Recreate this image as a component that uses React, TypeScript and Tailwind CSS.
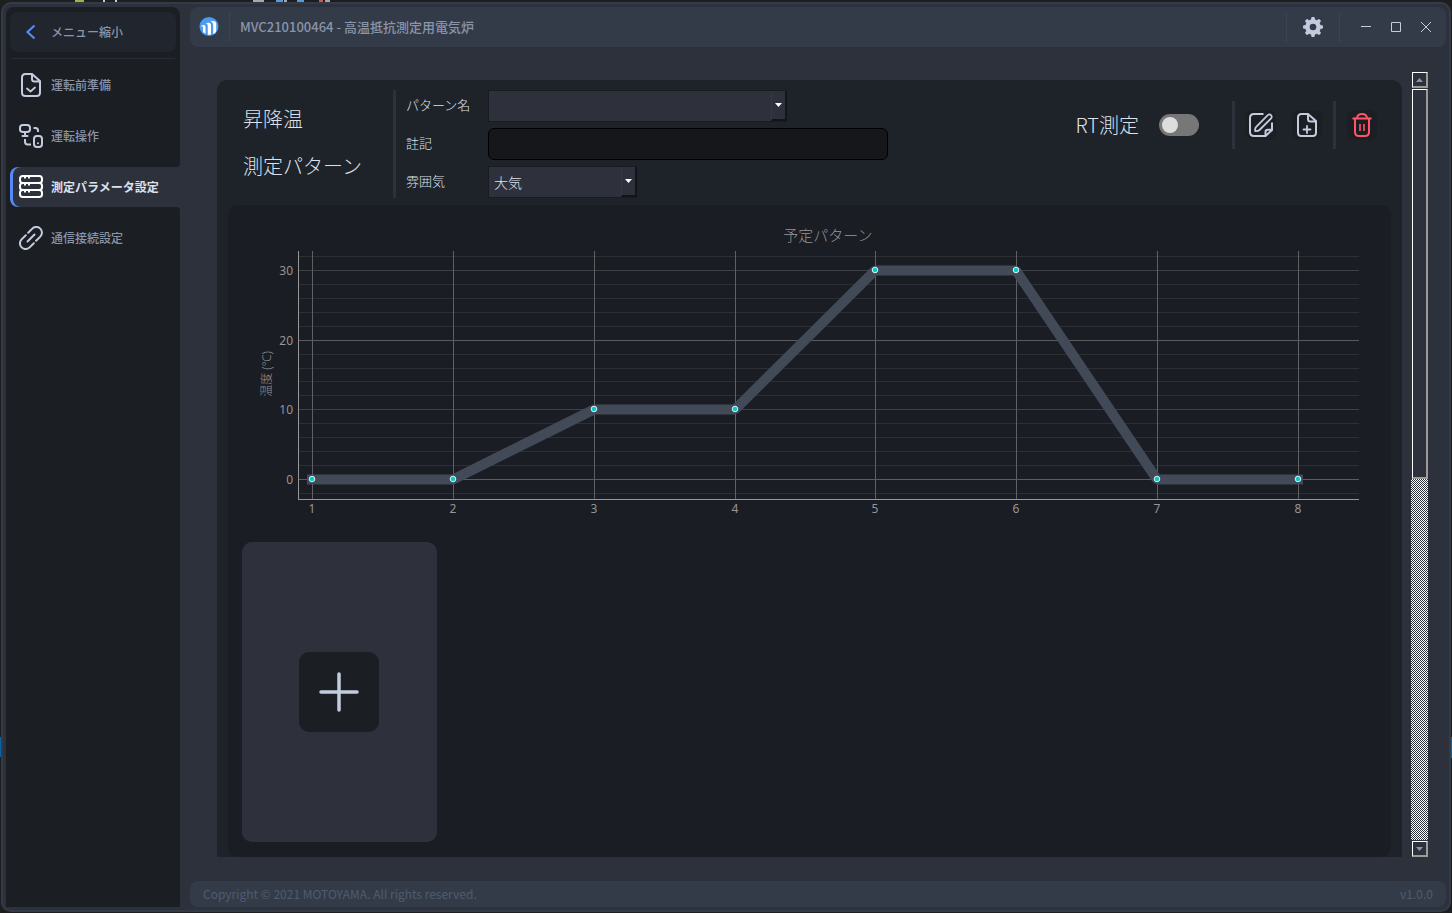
import React, { useState } from "react";

type IconProps = { className?: string };

function StrokeIcon({ className = "size-6", children }: IconProps & { children: React.ReactNode }) {
  return (
    <svg
      viewBox="0 0 24 24"
      className={className}
      fill="none"
      stroke="currentColor"
      strokeWidth="2"
      strokeLinecap="round"
      strokeLinejoin="round"
      aria-hidden="true"
    >
      {children}
    </svg>
  );
}

function FileCheckIcon() {
  return (
    <StrokeIcon>
      <path d="M13 1H6.500C4 1 3 2.500 3 4.500v15C3 21.700 4.200 23 6.500 23h11c2.300 0 3.500-1.300 3.500-3.500V8L13 1v5c0 1.700.8 2.500 2.500 2.500H21" />
      <path d="m8 15.500 3.500 3L16 14.500" strokeWidth="1.800" />
    </StrokeIcon>
  );
}

function OperationIcon() {
  return (
    <StrokeIcon>
      <rect x="1" y="1" width="10" height="7" rx="2.800" />
      <path d="M6 8.500v3.500M3.500 12h5" />
      <path d="M14.500 4h2c1.500 0 2.500 1 2.500 2.500V8" strokeLinecap="butt" />
      <path d="M6 15v2.500C6 19.500 7 20.500 8.500 20.500H12" strokeLinecap="butt" />
      <rect x="15" y="12" width="8" height="11" rx="3" />
      <path d="M19 19.200v.1" />
    </StrokeIcon>
  );
}

function StackIcon() {
  return (
    <StrokeIcon>
      <rect x="1" y="1" width="22" height="7" rx="2.800" />
      <rect x="1" y="8" width="22" height="7" rx="2.800" />
      <rect x="1" y="15" width="22" height="7" rx="2.800" />
      <path d="M6 2v1.500M10 2v1.500M6 9v1.500M10 9v1.500M6 16v1.500M10 16v1.500" strokeLinecap="butt" />
    </StrokeIcon>
  );
}

function LinkIcon() {
  return (
    <StrokeIcon>
      <path d="m8.500 15.500 7-7" />
      <path d="m9.200 6.800 4.100-4.200a5.400 5.400 0 0 1 8 8l-4.200 4.200" />
      <path d="m6.800 9.200-4.200 4.200a5.400 5.400 0 0 0 8 8l4.200-4.200" />
    </StrokeIcon>
  );
}

function EditIcon() {
  return (
    <StrokeIcon>
      <path d="M14.500 1H5C2.500 1 1 2.500 1 5v14c0 2.500 1.500 4 4 4h11.500L23 17V9.500" strokeLinecap="butt" />
      <path d="M16.500 22.500V19c0-1.500.8-2.300 2.300-2.300H23" />
      <path d="M6.200 18.200c-.3-2.200-.1-3.300 1-4.400L18.800 2.200a2.100 2.100 0 0 1 3.300 3.100L10.500 17c-1.200 1.200-2.200 1.300-4.300 1.200Z" strokeWidth="1.800" />
    </StrokeIcon>
  );
}

function FilePlusIcon() {
  return (
    <StrokeIcon>
      <path d="M13 1H6.500C4 1 3 2.500 3 4.500v15C3 21.700 4.200 23 6.500 23h11c2.300 0 3.500-1.300 3.500-3.500V8L13 1v5c0 1.700.8 2.500 2.500 2.500H21" />
      <path d="M12 13v7M8.500 16.500h7" strokeWidth="1.800" />
    </StrokeIcon>
  );
}

function TrashIcon() {
  return (
    <StrokeIcon>
      <path d="M3.200 5.500h17.600M7 5C7.300 2.500 9 1 12 1s4.700 1.500 5 4" />
      <path d="M5 5.500V19c0 2.500 1.500 4 4 4h6c2.500 0 4-1.500 4-4V5.500" />
      <path d="M10 11v7M14 11v7" strokeWidth="1.600" strokeLinecap="butt" />
    </StrokeIcon>
  );
}

function GearIcon() {
  const teeth = [0, 45, 90, 135];
  return (
    <svg viewBox="0 0 20 20" className="size-5" fill="currentColor" aria-hidden="true">
      <mask id="gear-hole">
        <rect width="20" height="20" fill="white" />
        <circle cx="10" cy="10" r="3.300" fill="black" />
      </mask>
      <g mask="url(#gear-hole)">
        <circle cx="10" cy="10" r="7.800" />
        {teeth.map((a) => (
          <rect key={a} x="8.200" y="0" width="3.600" height="20" rx="1.200" transform={`rotate(${a} 10 10)`} />
        ))}
      </g>
    </svg>
  );
}

function Logo() {
  return (
    <svg viewBox="0 0 20 20" className="size-5" aria-hidden="true">
      <circle cx="10" cy="9.500" r="9.500" fill="#4c9bef" />
      <path d="M2.300 8.700c1.700-1 4.200-.9 4.200 1.300v6.500l-1.600-.8c-.7-.5-.9-.9-.9-1.700V10.500c0-.9-.6-1.200-1.700-1Z" fill="#fff" />
      <path d="M6.600 6.600c2.700-1.500 5.400-1 5.400 1.700v9.200c-1.200.3-2.100.3-3.200 0V9.300C8.800 7.500 8.100 6.800 6.600 6.600Z" fill="#fff" />
      <path d="M11 4.800c3.200-1.600 6.200-.9 6.200 2v6.700c0 1.700-1.600 2.900-3 3.500V8c0-2-1-3-3.200-3.200Z" fill="#fff" />
    </svg>
  );
}

const menu = [
  { label: "運転前準備", Icon: FileCheckIcon },
  { label: "運転操作", Icon: OperationIcon },
  { label: "測定パラメータ設定", Icon: StackIcon },
  { label: "通信接続設定", Icon: LinkIcon },
];

function Sidebar() {
  const [active, setActive] = useState(2);
  return (
    <aside className="flex w-[174px] shrink-0 flex-col rounded-t-lg bg-[#1b1e23] text-xs font-medium text-[#8a95aa]">
      <div className="px-1 pt-[5px]">
        <button className="flex h-10 w-full items-center rounded-lg bg-[#21252d] pl-[9px]">
          <svg viewBox="0 0 24 24" className="size-6" fill="none" stroke="#568af2" strokeWidth="2.200" aria-hidden="true">
            <path d="m15.500 5.500-7 6.500 7 6.500" />
          </svg>
          <span className="pl-2">メニュー縮小</span>
        </button>
      </div>
      <hr className="mx-[5px] mt-1.5 border-[#272c36]" />
      <nav className="flex flex-col gap-[11px] pt-1.5 pl-1">
        {menu.map(({ label, Icon }, i) =>
          i === active ? (
            <button key={label} className="relative flex h-10 rounded-l-lg bg-[#568af2] pl-[3px] font-bold text-[#dce1ec]">
              <span className="flex flex-1 items-center self-stretch rounded-l-lg bg-[#2c313c] pl-1.5">
                <span className="text-white">
                  <Icon />
                </span>
                <span className="pl-2">{label}</span>
              </span>
              <svg viewBox="0 0 4 4" className="absolute -top-1 right-0 size-1" fill="#2c313c" aria-hidden="true">
                <path d="M4 0A4 4 0 0 1 0 4h4Z" />
              </svg>
              <svg viewBox="0 0 4 4" className="absolute right-0 -bottom-1 size-1" fill="#2c313c" aria-hidden="true">
                <path d="M0 0a4 4 0 0 1 4 4V0Z" />
              </svg>
            </button>
          ) : (
            <button key={label} onClick={() => setActive(i)} className="flex h-10 items-center pl-[9px]">
              <span className="text-[#c3ccdf]">
                <Icon />
              </span>
              <span className="pl-2">{label}</span>
            </button>
          ),
        )}
      </nav>
    </aside>
  );
}

function TitleBar() {
  return (
    <header className="flex h-10 shrink-0 items-center rounded-lg bg-[#343b48] text-[#c3ccdf]">
      <div className="flex w-10 border-r border-[#3c4454] py-[5px] pl-[9px]">
        <Logo />
      </div>
      <h1 className="flex-1 pl-2.5 text-[13px] font-medium text-[#8a95aa]">MVC210100464 - 高温抵抗測定用電気炉</h1>
      <div className="flex h-[30px] w-[54px] items-center justify-center border-x border-[#3c4454]">
        <button aria-label="設定">
          <GearIcon />
        </button>
      </div>
      <div className="flex gap-2.5 pr-2.5 pl-4">
        <button aria-label="最小化" className="grid size-5 place-items-center">
          <svg viewBox="0 0 10 10" className="size-2.5" stroke="currentColor">
            <path d="M0 4.500h10" />
          </svg>
        </button>
        <button aria-label="最大化" className="grid size-5 place-items-center">
          <svg viewBox="0 0 10 10" className="size-2.5" stroke="currentColor" fill="none">
            <path d="M.5.5h9v9h-9Z" />
          </svg>
        </button>
        <button aria-label="閉じる" className="grid size-5 place-items-center">
          <svg viewBox="0 0 10 10" className="size-2.5" stroke="currentColor">
            <path d="m0 0 10 10M10 0 0 10" />
          </svg>
        </button>
      </div>
    </header>
  );
}

function Combo({ id, width, options }: { id: string; width: string; options: string[] }) {
  return (
    <div className={`relative flex h-8 ${width}`}>
      <select
        id={id}
        className="w-full appearance-none border border-[#1a1b20] bg-[#2e313c] px-[5px] text-sm font-light text-[#dce1ec] outline-none"
      >
        {options.map((o) => (
          <option key={o}>{o}</option>
        ))}
      </select>
      <span className="pointer-events-none absolute inset-y-px right-0 grid w-4 place-items-center border-r-2 border-b-2 border-l border-r-[#14151a] border-b-[#14151a] border-l-[#343844]">
        <svg viewBox="0 0 7 4" className="h-1 w-[7px]" fill="#fff" aria-hidden="true">
          <path d="M0 0h7L3.500 4Z" />
        </svg>
      </span>
    </div>
  );
}

function PatternHeader() {
  return (
    <div className="flex pt-2.5 pr-[25px] pl-[26px] text-[#dce1ec]">
      <h2 className="w-[150px] pt-[5px] text-xl leading-[47px] font-light whitespace-nowrap">
        昇降温
        <br />
        測定パターン
      </h2>
      <div className="grid grid-cols-[82px_auto] items-center gap-y-1.5 border-l-[3px] border-[#2c313c] pl-2.5 text-[13px] font-light">
        <label htmlFor="pattern" className="pb-0.5">パターン名</label>
        <Combo id="pattern" width="w-[299px]" options={[""]} />
        <label htmlFor="note" className="pb-0.5">註記</label>
        <input
          id="note"
          type="text"
          className="h-8 w-[400px] rounded-md border border-black bg-[#16171b] px-2 text-sm outline-none"
        />
        <label htmlFor="atmosphere" className="pb-0.5">雰囲気</label>
        <Combo id="atmosphere" width="w-[149px]" options={["大気"]} />
      </div>
      <div className="mt-[11px] ml-auto flex h-12 items-center">
        <label htmlFor="rt" className="pr-5 text-xl font-light">
          RT測定
        </label>
        <input
          id="rt"
          type="checkbox"
          className="h-[22px] w-10 appearance-none rounded-full bg-[#777777] p-[3px] before:block before:size-4 before:rounded-full before:bg-[#dddddd] checked:bg-[#568af2] checked:before:ml-auto"
        />
        <div className="ml-[33px] flex h-12 items-center gap-4 border-x-[3px] border-[#2c313c] px-[11px] text-[#c3ccdf]">
          <button aria-label="編集" className="grid size-[30px] place-items-center rounded-lg bg-[#1b1e23]">
            <EditIcon />
          </button>
          <button aria-label="新規作成" className="grid size-[30px] place-items-center rounded-lg bg-[#1b1e23]">
            <FilePlusIcon />
          </button>
        </div>
        <button aria-label="削除" className="ml-[11px] grid size-[30px] place-items-center rounded-lg bg-[#1b1e23] text-[#ff5566]">
          <TrashIcon />
        </button>
      </div>
    </div>
  );
}

const temperatures = [0, 0, 10, 10, 30, 30, 0, 0];
const gridX = [84, 225, 366, 507, 647, 788, 929, 1070];
const yOf = (t: number) => Math.floor(273.2 - t * 6.95);
const minorTicks = [-2, 2, 4, 6, 8, 12, 14, 16, 18, 22, 24, 26, 28, 32];

function PatternChart() {
  const points = temperatures.map((t, i) => `${gridX[i]},${yOf(t) + 0.5}`).join(" ");
  return (
    <svg viewBox="0 0 1163 322" className="w-full" role="img" aria-label="予定パターン">
      <g shapeRendering="crispEdges" strokeWidth="1">
        {minorTicks.map((t) => (
          <path key={t} d={`M70 ${yOf(t) + 0.5}H1131`} stroke="#2c2f34" />
        ))}
        {[0, 10, 20, 30].map((t) => (
          <path key={t} d={`M70 ${yOf(t) + 0.5}H1131`} stroke={t % 20 ? "#3f4144" : "#5a5c5f"} />
        ))}
        {gridX.map((x) => (
          <path key={x} d={`M${x + 0.5} 45V293`} stroke="#5e6063" />
        ))}
        <path d="M70.500 45V293.500H1131" stroke="#969696" fill="none" />
      </g>
      <polyline points={points} fill="none" stroke="#424a58" strokeWidth="10" strokeLinecap="square" strokeLinejoin="bevel" />
      {temperatures.map((t, i) => (
        <circle key={i} cx={gridX[i]} cy={yOf(t)} r="2.800" fill="#00cccc" stroke="#d8f4f4" />
      ))}
      <g fill="#969696" className="font-['Noto_Sans','Noto_Sans_CJK_JP',sans-serif] text-xs">
        {[0, 10, 20, 30].map((t) => (
          <text key={t} x="65" y={yOf(t) + 5} textAnchor="end">
            {t}
          </text>
        ))}
        {gridX.map((x, i) => (
          <text key={x} x={x} y="307" textAnchor="middle">
            {i + 1}
          </text>
        ))}
        <text transform="translate(43 168) rotate(-90)" textAnchor="middle" className="font-light">
          温度 (℃)
        </text>
        <text x="600" y="35" textAnchor="middle" className="text-[15px] font-light">
          予定パターン
        </text>
      </g>
    </svg>
  );
}

function ScrollArrow({ down = false }: { down?: boolean }) {
  return (
    <button
      aria-label={down ? "下へ" : "上へ"}
      className="grid h-4 shrink-0 place-items-center border-t border-r-2 border-b-2 border-l border-t-white border-r-[#9c9a94] border-b-[#9c9a94] border-l-white"
    >
      <svg viewBox="0 0 7 4" className="h-1 w-[7px]" fill="#8a95aa" aria-hidden="true">
        <path d={down ? "M0 0h7L3.500 4Z" : "M0 4h7L3.500 0Z"} />
      </svg>
    </button>
  );
}

function ScrollBar() {
  return (
    <div className="flex w-[17px] shrink-0 flex-col">
      <div className="ml-px flex flex-col pt-px">
        <ScrollArrow />
      </div>
      <div className="mt-px ml-px flex-[388] border-t border-r-2 border-b-2 border-l border-t-white border-r-[#9c9a94] border-b-[#9c9a94] border-l-white" />
      <div className="flex-[362] bg-[repeating-conic-gradient(#ffffff_0_25%,#2c313c_0_50%)] bg-[length:2px_2px]" />
      <div className="mt-px ml-px flex flex-col">
        <ScrollArrow down />
      </div>
    </div>
  );
}

function Backdrop() {
  return (
    <svg className="absolute inset-0 size-full" aria-hidden="true">
      <rect x="75" width="9" height="2" fill="#a3b14c" />
      <rect x="103" width="2" height="2" fill="#ccc" />
      <rect x="115" width="2" height="2" fill="#ccc" />
      <rect x="253" width="11" height="2" fill="#a8a8a8" />
      <rect x="276" width="7" height="2" fill="#5b9bd5" />
      <rect x="284" width="3" height="2" fill="#a8a8a8" />
      <rect x="297" width="7" height="2" fill="#5b9bd5" />
      <rect x="319" width="4" height="2" fill="#c75b4f" />
      <rect x="325" width="5" height="2" fill="#a8a8a8" />
      <rect y="737" width="1" height="20" fill="#0a64a4" />
      <rect x="1451" y="737" width="1" height="21" fill="#0a64a4" />
    </svg>
  );
}

export default function App() {
  return (
    <div className="relative flex h-screen bg-[#1e1e1e] px-px pt-0.5 pb-px font-['Noto_Sans_CJK_JP',sans-serif]">
      <Backdrop />
      <div className="relative flex flex-1 gap-2.5 rounded-[10px] border-2 border-[#343b48] bg-[#2c313c] p-[3px]">
        <Sidebar />
        <div className="flex min-w-0 flex-1 flex-col gap-6">
          <TitleBar />
          <div className="flex min-h-0 flex-1 gap-[9px] pr-[18px] pl-[27px]">
            <main className="mt-[9px] flex min-w-0 flex-1 flex-col overflow-hidden rounded-t-[10px] bg-[#1e2229]">
              <PatternHeader />
              <section className="mx-[11px] mt-[7px] flex-1 rounded-[10px] bg-[#1a1d24] pt-px">
                <PatternChart />
                <div className="mt-3.5 ml-3.5 grid h-[300px] w-[195px] place-items-center rounded-[10px] bg-[#2e313c] pr-px">
                  <button aria-label="追加" className="grid size-20 place-items-center rounded-[10px] bg-[#1b1e23]">
                    <svg viewBox="0 0 40 40" className="size-10" stroke="#c3ccdf" strokeWidth="3.500" strokeLinecap="round" aria-hidden="true">
                      <path d="M20 2v36M2 20h36" />
                    </svg>
                  </button>
                </div>
              </section>
            </main>
            <ScrollBar />
          </div>
          <footer className="flex h-[26px] shrink-0 items-center justify-between rounded-lg bg-[#343b48] px-[13px] text-xs text-[#4f5b6e]">
            <span>Copyright © 2021 MOTOYAMA. All rights reserved.</span>
            <span>v1.0.0</span>
          </footer>
        </div>
      </div>
    </div>
  );
}
